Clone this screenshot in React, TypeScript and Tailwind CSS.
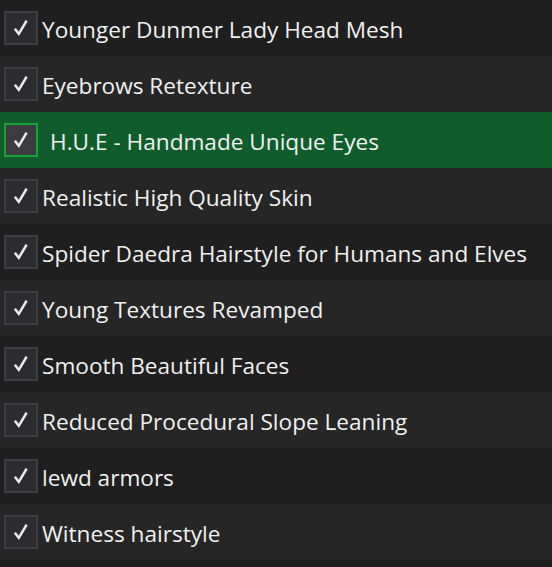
import React from "react";

type Mod = { name: string; active?: boolean };

const mods: Mod[] = [
  { name: "Younger Dunmer Lady Head Mesh" },
  { name: "Eyebrows Retexture" },
  { name: "H.U.E - Handmade Unique Eyes", active: true },
  { name: "Realistic High Quality Skin" },
  { name: "Spider Daedra Hairstyle for Humans and Elves" },
  { name: "Young Textures Revamped" },
  { name: "Smooth Beautiful Faces" },
  { name: "Reduced Procedural Slope Leaning" },
  { name: "lewd armors" },
  { name: "Witness hairstyle" },
];

function Check() {
  return (
    <svg width="16" height="18" viewBox="0 0 16 18" aria-hidden>
      <path
        d="M2.6 10.8 L5.8 14.8 L13 2.6"
        fill="none"
        stroke="#ececec"
        strokeWidth="2.5"
        strokeLinecap="square"
        strokeLinejoin="miter"
      />
    </svg>
  );
}

export default function App() {
  return (
    <div
      className="w-[552px] h-[567px] overflow-hidden bg-[#1f1f1f]"
      style={{ fontFamily: '"Open Sans", "Noto Sans", sans-serif' }}
    >
      {mods.map((m, i) => (
        <div
          key={m.name}
          className={
            "flex h-[56px] items-center pl-[4px] " +
            (m.active ? "bg-[#105d2b]" : i % 2 === 0 ? "bg-[#1f1f1f]" : "bg-[#262626]")
          }
        >
          <div
            className={
              "flex h-[34px] w-[34px] shrink-0 items-center justify-center border-2 " +
              (m.active ? "border-[#17a23a] bg-[#3b3b40]" : "border-[#3e3e42] bg-[#2c2c2f]")
            }
          >
            <Check />
          </div>
          <span
            className={
              "whitespace-nowrap pt-[4px] text-[22.6px] text-[#f0f0f0] " +
              (m.active ? "ml-[12px]" : "ml-[4px]")
            }
          >
            {m.name}
          </span>
        </div>
      ))}
    </div>
  );
}
